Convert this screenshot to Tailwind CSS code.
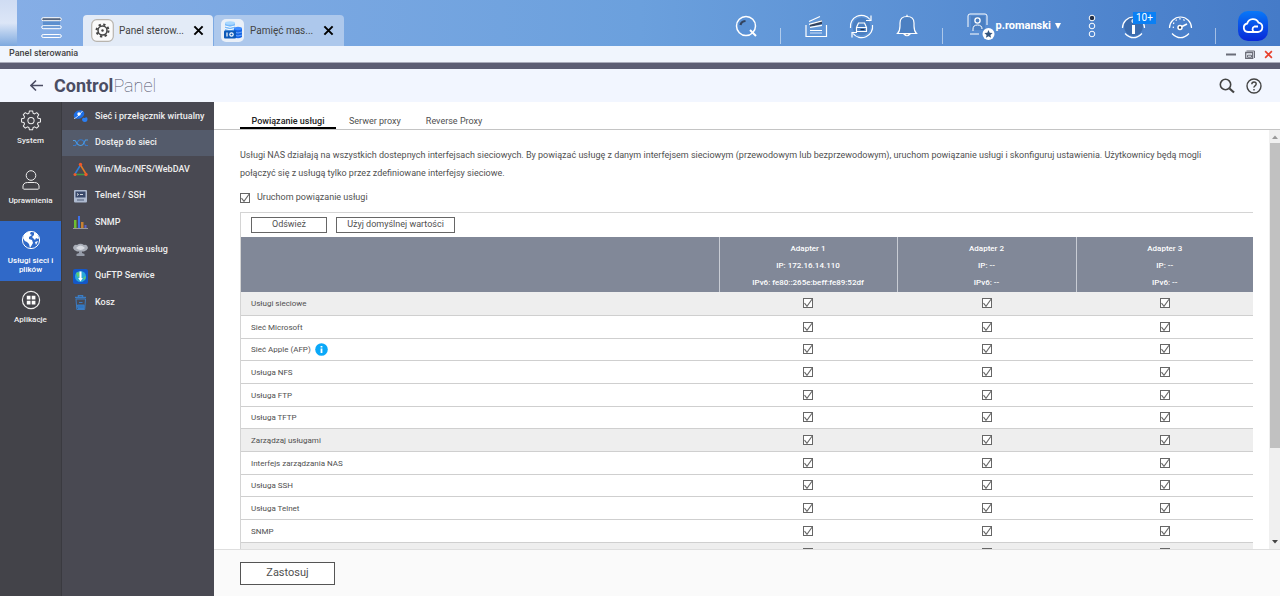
<!DOCTYPE html>
<html lang="pl">
<head>
<meta charset="utf-8">
<meta name="viewport" content="width=device-width, initial-scale=1">
<title>Panel sterowania</title>
<script src="https://cdn.jsdelivr.net/npm/@tailwindcss/browser@4"></script>
</head>
<body class="flex h-screen flex-col overflow-hidden bg-white font-['Roboto','Liberation_Sans',sans-serif] text-[9px] text-[#505050]">

<svg class="hidden" aria-hidden="true">
  <symbol id="tick" viewBox="0 0 10 10"><path d="M1.5 5.2 4 8.4 9 1.2" fill="none" stroke="#666" stroke-width="1.1"/></symbol>
  <symbol id="close" viewBox="0 0 12 12"><path d="M1.5 1.5 10.5 10.5M10.5 1.5 1.5 10.5" fill="none" stroke="currentColor" stroke-width="2.200"/></symbol>
  <symbol id="gear" viewBox="0 0 24 24"><path d="M10 2h4l.7 3 1.8.8 2.700-1.600 2.600 2.600-1.600 2.700.8 1.800 3 .7v4l-3 .7-.8 1.800 1.600 2.700-2.600 2.600-2.700-1.600-1.800.8-.7 3h-4l-.7-3-1.800-.8-2.700 1.600-2.600-2.600 1.600-2.700-.8-1.800-3-.7v-4l3-.7.8-1.800-1.600-2.700 2.600-2.600 2.700 1.600 1.800-.8z" transform="translate(1.700 -.7) scale(.86)" fill="none" stroke="currentColor" stroke-width="1.300" stroke-linejoin="round"/><circle cx="12" cy="11.500" r="3.400" fill="none" stroke="currentColor" stroke-width="1.100"/></symbol>
</svg>

<header class="flex h-[46px] shrink-0 items-end bg-linear-to-r from-[#86aee6] via-[#6ba0dd] to-[#457bc8] text-white">
  <div class="h-full w-[17px] shrink-0 bg-linear-to-b from-[#cfdcf3] via-[#dce6f7] to-[#7ea9de]"></div>
  <button class="ml-6 flex h-9 items-center" aria-label="Menu">
    <svg class="h-[22px] w-[21px]" viewBox="0 0 21 22" fill="none" stroke="#fff"><path d="M2 2.500h17v8H2z" fill="#5c8fce" stroke="none"/><rect x=".7" y=".7" width="19.600" height="3" rx="1.500" fill="#56667f"/><rect x=".7" y="8.700" width="19.600" height="3" rx="1.500"/><rect x=".7" y="17.500" width="19.600" height="3" rx="1.500"/></svg>
  </button>
  <nav class="ml-[21px] flex gap-px text-[10px] text-[#444]">
    <div class="flex h-[31px] w-[130px] items-center rounded-t bg-[#e3ebf7] pl-2">
      <svg class="size-[23px] shrink-0" viewBox="0 0 23 23"><rect x=".7" y=".7" width="21.600" height="21.600" rx="5" fill="#fafafa" stroke="#b8b4ae" stroke-width="1.200"/><circle cx="11.500" cy="11.500" r="6" fill="none" stroke="#444" stroke-width="2" stroke-dasharray="2.300 2.412"/><circle cx="11.500" cy="11.500" r="4.500" fill="none" stroke="#444" stroke-width="1.500"/><circle cx="11.500" cy="11.500" r="1.200" fill="#444"/></svg>
      <span class="ml-[5px] w-[74px] whitespace-nowrap">Panel sterow...</span>
      <button aria-label="Zamknij Panel sterowania" class="text-black"><svg class="size-[11px]"><use href="#close"/></svg></button>
    </div>
    <div class="flex h-[31px] w-[130px] items-center rounded-t bg-[#adc8ec] pl-[7px]">
      <svg class="size-[23px] shrink-0" viewBox="0 0 23 23"><rect width="23" height="23" rx="5" fill="#eaf0f8"/><path d="M4 4h10v8H4z" fill="#79bafa"/><ellipse cx="9" cy="4" rx="5" ry="1.800" fill="#a9d8ff"/><path d="M4 7q5 2.500 10 0M4 9.500q5 2.500 10 0" stroke="#fff" fill="none"/><path d="M13 9.500h8V18q-4 2.500-8 0z" fill="#1565e6"/><ellipse cx="17" cy="9.500" rx="4" ry="1.700" fill="#3f8cff"/><path d="M13 13q4 2 8 0M13 16q4 2 8 0" stroke="#8fc0ff" fill="none" stroke-width=".7"/><rect x="3" y="11.500" width="12" height="8" rx="1" fill="#0b58b8"/><path d="M6 13.500v4" stroke="#fff" stroke-width="1.200"/><circle cx="10.500" cy="15.500" r="1.700" fill="none" stroke="#fff" stroke-width="1.200"/></svg>
      <span class="ml-[6px] w-[73px] whitespace-nowrap">Pamięć mas...</span>
      <button aria-label="Zamknij Pamięć masowa" class="text-black"><svg class="size-[11px]"><use href="#close"/></svg></button>
    </div>
  </nav>
  <div class="ml-auto mr-3 flex h-10 items-center">
    <button aria-label="Szukaj"><svg class="size-[23px]" viewBox="0 0 23 23" fill="none" stroke="#fff"><circle cx="11" cy="11" r="9.500" fill="#5b92d6" stroke-width="1.500"/><path d="M5.500 10q.5-3.500 5-4" stroke="#33435f" stroke-width="2.200"/><path d="m15 15 6 6" stroke-width="2"/></svg></button>
    <i class="ml-[22px] mt-5 h-4 w-px bg-white/50"></i>
    <button aria-label="Pliki" class="ml-6"><svg class="size-[23px]" viewBox="0 0 23 23" fill="none" stroke="#fff" stroke-width="1.200"><path d="M1 10V21.500H21.500V10"/><path d="m5 9 12-4v4l-12 3z" fill="#33435f" stroke="none"/><path d="M4 6.500 15 1.500M4 9.300l13-3.500M5 12.300l12-2M5 15.500h12"/><path d="M5 18h12" stroke="#bcd3f2"/></svg></button>
    <button aria-label="Urządzenia zewnętrzne" class="ml-[21px]"><svg class="size-[25px]" viewBox="0 0 25 25" fill="none" stroke="#fff" stroke-width="1.200"><circle cx="12.500" cy="12.500" r="9" fill="#4c80c2" stroke="none"/><path d="M1.500 14A11 11 0 0 1 21 5.500M22 1.500v5h-5M23.500 11A11 11 0 0 1 4 19.500M3 23.500v-5h5"/><path d="M7.500 13.500 9.500 9h6l2 4.500v4h-10zM7.500 13.500h10"/><path d="M11.500 15.500h4" stroke="#22304a"/></svg></button>
    <button aria-label="Powiadomienia" class="ml-[22px]"><svg class="h-[24px] w-[22px]" viewBox="0 0 22 24" fill="none" stroke="#fff" stroke-width="1.200"><path d="M1.500 19.500Q4 17 4 12V9q0-6.500 7-6.500T18 9v3q0 5 2.500 7.500z" fill="#4c80c2"/><path d="M11 .7V3"/><path d="M8 20q3 3.500 6 0z" fill="#33435f"/></svg></button>
    <i class="ml-6 mt-5 h-4 w-px bg-white/50"></i>
    <button class="ml-[24px] flex items-center text-[11px] font-bold">
      <svg class="h-[28px] w-[28px]" viewBox="0 0 28 28" fill="none" stroke="#fff"><path d="M1 15V4q0-2 2-2h15q2 0 2 2v9M3 22h9"/><path d="M4 4h14v14H4z" fill="#4c80c2" stroke="none"/><circle cx="10.500" cy="8.500" r="2.600" stroke-width="1.300"/><path d="M6 19v-2q0-4 4.500-4t4.500 4"/><circle cx="21.500" cy="22" r="6" fill="#fff" stroke="none"/><path d="m21.500 18 1.200 2.700 2.900.3-2.200 1.900.7 2.900-2.600-1.500-2.600 1.500.7-2.900-2.200-1.900 2.900-.3z" fill="#33557f" stroke="none"/></svg>
      <span class="ml-px">p.romanski</span><svg class="ml-1 size-[6px]" viewBox="0 0 6 6"><path d="M0 0h6L3 6z" fill="#fff"/></svg>
    </button>
    <button aria-label="Więcej" class="ml-[27px]"><svg class="h-[24px] w-[8px]" viewBox="0 0 8 24" fill="none" stroke="#fff"><circle cx="4" cy="4" r="2.800" fill="#222e44"/><circle cx="4" cy="12" r="2.800"/><circle cx="4" cy="20" r="2.800"/></svg></button>
    <button aria-label="Informacje, ponad 10" class="relative ml-[25px]">
      <svg class="size-[25px]" viewBox="0 0 25 25" fill="none" stroke="#fff" stroke-width="1.200"><circle cx="12.500" cy="12.500" r="9.500" fill="#3c6cae" stroke="none"/><path d="M1.500 14A11 11 0 0 1 23.500 14M4 19.500Q12.500 28 21 19.500"/><circle cx="12.500" cy="7" r="1.500"/><path d="M12.500 11v9" stroke-width="3"/></svg>
      <span class="absolute -top-0.5 left-3 bg-[#0a80f5] px-[3px] text-[10px] leading-3">10+</span>
    </button>
    <button aria-label="Monitor zasobów" class="ml-[22px]"><svg class="size-[25px]" viewBox="0 0 25 25" fill="none" stroke="#fff" stroke-width="1.200"><path d="M1.500 14A11 11 0 0 1 23.500 14M4 19.500Q12.500 28 21 19.500"/><path d="M5.500 14A7 7 0 0 1 18 8" stroke-dasharray="1.500 2.500"/><circle cx="12" cy="13.500" r="2" fill="#33435f" stroke-width="1.500"/><path d="m14 12.500 5-2.500" stroke-width="1.800"/></svg></button>
    <i class="ml-[22px] mt-5 h-4 w-px bg-white/50"></i>
    <button aria-label="myQNAPcloud" class="ml-[22px]"><svg class="size-[30px]" viewBox="0 0 30 30" fill="none" stroke="#fff" stroke-width="1.800"><rect width="30" height="30" rx="10" fill="url(#cloudBg)" stroke="none"/><defs><linearGradient id="cloudBg" x2="0" y2="1"><stop stop-color="#0878f8"/><stop offset="1" stop-color="#0828d8"/></linearGradient></defs><path d="M19 21H10a4.300 4.300 0 0 1-.8-8.500 6 6 0 0 1 11.300-.8 4.700 4.700 0 0 1-.5 9.300h-3.500a2.900 2.900 0 0 1 0-5.500h3.500"/></svg></button>
  </div>
</header>

<div class="flex h-4 shrink-0 items-center bg-[#f0f5fd] pl-[9px] pr-[7px] font-medium text-[#444]">
  <h1>Panel sterowania</h1>
  <div class="ml-auto flex items-center gap-[9px]">
    <button aria-label="Minimalizuj"><svg class="h-[9px] w-[10px]" viewBox="0 0 10 9"><path d="M0 4.500h10" stroke="#6a6d78" stroke-width="2"/></svg></button>
    <button aria-label="Przywróć"><svg class="h-[9px] w-[10px]" viewBox="0 0 10 9" fill="none" stroke="#6a6d78"><path d="M1.500 1h8v7"/><path d="M.7 2.500h7v6h-7z" stroke-width="1.300"/><path d="M2.500 5.200h4v2h-4z"/></svg></button>
    <button aria-label="Zamknij" class="text-[#e8402c]"><svg class="size-[9px]"><use href="#close"/></svg></button>
  </div>
</div>
<div class="h-[7px] shrink-0 border-t border-[#a9abba] bg-[#5c5d73]"></div>

<div class="flex h-[33px] shrink-0 items-center bg-[#f2f6ff] pl-[30px] pr-[18px] text-[#4b4d63]">
  <button aria-label="Wstecz"><svg class="size-[13px]" viewBox="0 0 13 13" fill="none" stroke="currentColor" stroke-width="1.600"><path d="M6 1.500 1 6.500 6 11.500M1 6.500h12"/></svg></button>
  <h2 class="ml-[11px] text-[18px] leading-6"><span class="font-bold">Control</span><span class="font-thin">Panel</span></h2>
  <button aria-label="Szukaj w panelu" class="ml-auto"><svg class="size-[16px]" viewBox="0 0 16 16" fill="none" stroke="#444" stroke-width="1.600"><circle cx="6.500" cy="6.500" r="5.200"/><path d="m10.500 10.500 4.500 4" stroke-width="2.200"/></svg></button>
  <button aria-label="Pomoc" class="ml-[11px]"><svg class="size-[16px]" viewBox="0 0 16 16" fill="none" stroke="#444" stroke-width="1.400"><circle cx="8" cy="8" r="7"/><path d="M5.800 6.300q0-2.300 2.200-2.300t2.200 2q0 1-1.200 1.800T8 9.700"/><path d="M8 11v1.500"/></svg></button>
</div>

<div class="flex min-h-0 flex-1">
  <nav class="w-[62px] shrink-0 border-r border-[#3a3a40] bg-[#434349] text-center text-[8px] font-medium leading-[9px] text-[#eee]">
    <a href="#" class="flex h-[59px] flex-col items-center pt-2"><svg class="size-[22px]"><use href="#gear"/></svg><span class="mt-1">System</span></a>
    <a href="#" class="flex h-[60px] flex-col items-center pt-2"><svg class="size-[22px]" viewBox="0 0 22 22" fill="none" stroke="currentColor"><circle cx="11" cy="6.500" r="4.800"/><path d="M3 19.500q-.8-6 4.500-6h7q5.300 0 4.500 6-.3.700-1 .7H4q-.7 0-1-.7z"/></svg><span class="mt-[5px]">Uprawnienia</span></a>
    <a href="#" class="flex h-[60px] flex-col items-center bg-[#3069c8] pt-2 text-white"><svg class="size-[22px]" viewBox="0 0 22 22"><circle cx="11" cy="11" r="8.600" fill="none" stroke="#fff"/><path d="M4 6q3-4 7-3.500L10 5l2 1-3 2v2l3 1 1 3-3 5-1-4-2-2q-3-1-4-4zM14 3l3 2 2 4-1 1-2-1-1 2-3-3 2-2zM15 13l3-1-2 4z" fill="#fff"/></svg><span class="mt-[5px] w-[52px]">Usługi sieci i plików</span></a>
    <a href="#" class="flex h-[60px] flex-col items-center pt-2"><svg class="size-[22px]" viewBox="0 0 22 22"><circle cx="11" cy="11" r="8.600" fill="none" stroke="#eee" stroke-width="1.200"/><path d="M6.800 6.800h3.700v3.700H6.800zM11.700 6.800h3.700v3.700h-3.700zM6.800 11.700h3.700v3.700H6.800zM11.700 11.700h3.700v3.700h-3.700z" fill="#fff"/></svg><span class="mt-1">Aplikacje</span></a>
  </nav>

  <nav class="w-[152px] shrink-0 bg-[#494952] pt-px font-medium text-[#eee]">
    <div class="grid h-[213px] grid-cols-1 grid-rows-8 whitespace-nowrap">
      <a href="#" class="flex items-center gap-[7px] pl-[11px]"><svg class="size-[15px] shrink-0" viewBox="0 0 15 15"><ellipse cx="6" cy="5.500" rx="5.500" ry="4" transform="rotate(-25 6 5.500)" fill="#1d6fe8"/><path d="M1 9.500Q4 9 9.500 2" stroke="#cfe3ff" fill="none"/><circle cx="6" cy="5" r="1.700" fill="#fff"/><path d="M9 10q1.500-2 2.500-1 3-2 3 1 0 3-2.500 3-3 0-3-3z" fill="#2a7ff5"/></svg>Sieć i przełącznik wirtualny</a>
      <a href="#" aria-current="page" class="flex items-center gap-[7px] bg-[#545b6b] pl-[11px]"><svg class="size-[15px] shrink-0" viewBox="0 0 15 15" fill="none" stroke-width="1.100"><path d="M0 10.500h2.500L5.500 5.500q2.500-1.500 4.500 0l2.500 5H15" stroke="#3a78c8"/><path d="M0 5.500h2l3 4q2.500 2 5 0l2.500-4.500H15" stroke="#4d9be0"/></svg>Dostęp do sieci</a>
      <a href="#" class="flex items-center gap-[7px] pl-[11px]"><svg class="size-[15px] shrink-0" viewBox="0 0 15 15" fill="none" stroke-width="1.500"><path d="M2 12 7.500 3" stroke="#2f7ed8"/><path d="M7.500 3 13 12" stroke="#e07b25"/><path d="M2 12.500h11" stroke="#3d9a45"/><g fill="#f0582a" stroke="none"><circle cx="7.500" cy="2.500" r="1.700"/><circle cx="2" cy="12.500" r="1.500"/><circle cx="13" cy="12.500" r="1.700"/></g></svg>Win/Mac/NFS/WebDAV</a>
      <a href="#" class="flex items-center gap-[7px] pl-[11px]"><svg class="size-[15px] shrink-0" viewBox="0 0 15 15"><rect x="1" y="1" width="13" height="12.500" rx="1" fill="#aebad0"/><rect x="2.500" y="2.500" width="10" height="6" fill="#39486a"/><path d="M4 4.500l1.500 1L4 6.500M7 5.500h3" stroke="#fff" fill="none" stroke-width=".8"/><path d="M4 11h7" stroke="#4e5c78"/></svg>Telnet / SSH</a>
      <a href="#" class="flex items-center gap-[7px] pl-[11px]"><svg class="size-[15px] shrink-0" viewBox="0 0 15 15"><path d="M1 5h2.500v8H1z" fill="#6fbf30"/><path d="M5 1h2v12H5z" fill="#3c6fe8"/><path d="M8 7h2.500v6H8z" fill="#c88232"/><path d="M11.500 10H13.500v3h-2z" fill="#5a63c8"/><path d="M0 13.500h15" stroke="#999"/></svg>SNMP</a>
      <a href="#" class="flex items-center gap-[7px] pl-[11px]"><svg class="size-[15px] shrink-0" viewBox="0 0 15 15"><path d="M0 6q1-4 4-3 3.500-2.500 7 0 3-1 4 3-1 3-4 3.500H4Q1 9 0 6z" fill="#a9aeb8"/><path d="M3 6q4.500-5 9 0-4.500 4-9 0z" fill="#d8dbe2"/><path d="M6 9h3v2l2.500 1v2H3.500v-2L6 11z" fill="#959ba8"/></svg>Wykrywanie usług</a>
      <a href="#" class="flex items-center gap-[7px] pl-[11px]"><svg class="size-[15px] shrink-0" viewBox="0 0 15 15"><rect width="15" height="15" rx="2" fill="#1457c8"/><circle cx="7.500" cy="7.500" r="5.500" fill="#2aa8d8"/><path d="M3 4q3-2 4 1l-2 4zM10 9l3-2-1 4z" fill="#5ecb70"/><path d="M6.500 2.500h2V9h1.300l-2.300 3.500L5.200 9h1.300z" fill="#fff"/></svg>QuFTP Service</a>
      <a href="#" class="flex items-center gap-[7px] pl-[11px]"><svg class="size-[15px] shrink-0" viewBox="0 0 15 15" fill="none" stroke="#3a7cc4"><path d="M2 2.500h11M5.500 2v-1.500h4V2" stroke-width="1.500"/><path d="M3 4h9.500l-.8 10.500H3.800z"/><path d="M4.500 10h6.500v3.500h-6z" fill="#2f75c0"/><path d="M6 7.500h3.500"/></svg>Kosz</a>
    </div>
  </nav>

  <main class="flex min-w-0 flex-1 flex-col">
    <div class="flex h-[28px] shrink-0 items-end border-b border-[#c4c4c4] pl-[26px] leading-3">
      <button class="h-[14px] w-24 border-b-2 border-black font-medium text-[#222]">Powiązanie usługi</button>
      <button class="ml-[13px] h-[14px] pb-0.5">Serwer proxy</button>
      <button class="ml-[25px] h-[14px] pb-0.5">Reverse Proxy</button>
    </div>
    <div class="flex min-h-0 flex-1">
      <div class="min-w-0 flex-1 overflow-y-auto pl-[26px] pr-4 pt-4 [scrollbar-width:none]">
        <p class="pr-6 leading-[18px]">Usługi NAS działają na wszystkich dostepnych interfejsach sieciowych. By powiązać usługę z danym interfejsem sieciowym (przewodowym lub bezprzewodowym), uruchom powiązanie usługi i skonfiguruj ustawienia. Użytkownicy będą mogli połączyć się z usługą tylko przez zdefiniowane interfejsy sieciowe.</p>
        <label class="mt-2 flex h-4 items-center gap-[7px]">
          <span class="relative flex size-[10px]"><input type="checkbox" checked class="peer size-[10px] appearance-none border border-[#666] bg-white"><svg class="pointer-events-none absolute inset-0 hidden size-[10px] peer-checked:block"><use href="#tick"/></svg></span>
          Uruchom powiązanie usługi
        </label>
        <section class="mt-[6px] border-l border-t border-[#d4d4d4]">
          <div class="flex h-6 items-center gap-[9px] pl-[10px]">
            <button class="h-4 w-[76px] border border-[#666]">Odśwież</button>
            <button class="h-4 w-[119px] border border-[#666]">Użyj domyślnej wartości</button>
          </div>
          <table class="w-full table-fixed border-collapse text-[8px]" aria-label="Powiązanie usługi">
            <thead>
              <tr class="h-[55px] bg-[#818898] text-white">
                <td></td>
                <th scope="col" class="w-[178px] border-l border-[#c8ccd4] px-0 pb-0 pt-0.5 font-medium leading-[17px]">Adapter 1<br>IP: 172.16.14.110<br>IPv6: fe80::265e:beff:fe89:52df</th>
                <th scope="col" class="w-[179px] border-l border-[#c8ccd4] px-0 pb-0 pt-0.5 font-medium leading-[17px]">Adapter 2<br>IP: --<br>IPv6: --</th>
                <th scope="col" class="w-[177px] border-l border-[#c8ccd4] px-0 pb-0 pt-0.5 font-medium leading-[17px]">Adapter 3<br>IP: --<br>IPv6: --</th>
              </tr>
            </thead>
            <tbody id="services"></tbody>
          </table>
        </section>
      </div>
      <div class="flex w-[11px] shrink-0 flex-col items-center bg-[#f0f0f0]" aria-hidden="true">
        <svg class="h-[13px] w-[6px] shrink-0" viewBox="0 0 6 13"><path d="M0 9h6L3 5.500z" fill="#999"/></svg>
        <div class="h-[305px] w-full border-l border-[#f0f0f0] bg-[#c1c1c1]"></div>
        <svg class="mt-auto h-[13px] w-[6px] shrink-0" viewBox="0 0 6 13"><path d="M0 4h6L3 7.500z" fill="#444"/></svg>
      </div>
    </div>
    <footer class="flex h-[47px] shrink-0 items-center border-t border-[#dedede] bg-[#fafafa] pl-[26px]">
      <button class="h-[23px] w-[95px] border border-[#555] bg-white text-[11px]">Zastosuj</button>
    </footer>
  </main>
</div>

<script>
  const services = [
    { name: "Usługi sieciowe", group: true }, { name: "Sieć Microsoft" }, { name: "Sieć Apple (AFP)", info: true },
    { name: "Usługa NFS" }, { name: "Usługa FTP" }, { name: "Usługa TFTP" }, { name: "Zarządzaj usługami", group: true },
    { name: "Interfejs zarządzania NAS" }, { name: "Usługa SSH" }, { name: "Usługa Telnet" }, { name: "SNMP" },
    { name: "", group: true }
  ];
  const info = '<button class="ml-1 align-middle" aria-label="Informacja"><svg class="size-[13px]" viewBox="0 0 13 13"><circle cx="6.500" cy="6.500" r="6.300" fill="#0aa8f8"/><path d="M6.500 5.500v4.500M6.500 3v1.500" stroke="#fff" stroke-width="1.800"/></svg></button>';
  const box = (service, n) => `<td class="p-0"><span class="relative mx-auto flex size-[10px]"><input type="checkbox" checked aria-label="${service}, Adapter ${n}" class="peer size-[10px] appearance-none border border-[#666] bg-white"><svg class="pointer-events-none absolute inset-0 hidden size-[10px] peer-checked:block"><use href="#tick"/></svg></span></td>`;
  document.getElementById("services").innerHTML = services.map(s =>
    `<tr class="${s.group ? "bg-[#eee]" : "bg-white"} h-[23px] border-b border-[#cfcfcf] nth-[3n]:h-[22px]"><th scope="row" class="whitespace-nowrap pb-0 pl-[10px] pt-0.5 text-left font-normal leading-4">${s.name}${s.info ? info : ""}</th>${[1, 2, 3].map(n => box(s.name, n)).join("")}</tr>`).join("");
</script>
</body>
</html>
